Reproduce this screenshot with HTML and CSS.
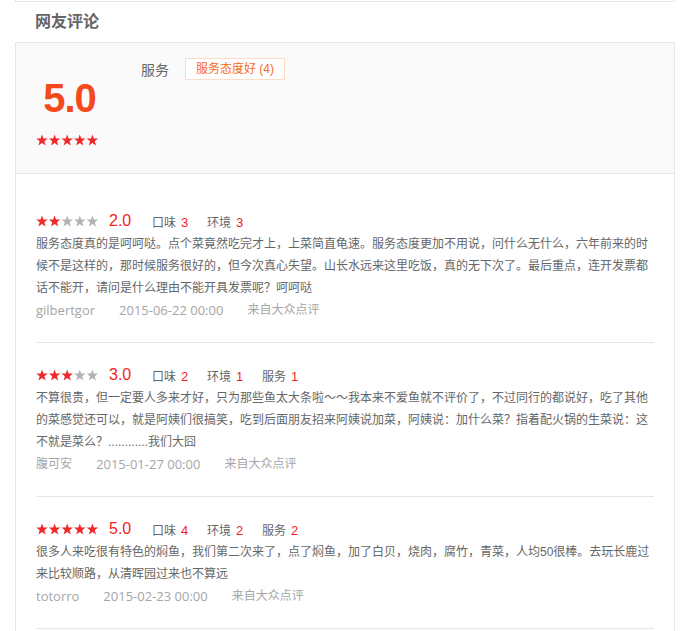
FILE: index.html
```html
<!DOCTYPE html>
<html lang="zh-CN">
<head>
<meta charset="utf-8">
<title>网友评论</title>
<link rel="stylesheet" href="styles.css">
</head>
<body>
<svg class="defs" width="0" height="0" aria-hidden="true">
  <defs>
    <polygon id="star" points="6,0.5 7.45,4.5 11.75,4.6 8.35,7.25 9.6,11.4 6,8.95 2.4,11.4 3.65,7.25 0.25,4.6 4.55,4.5"/>
  </defs>
</svg>
<div class="top-box"></div>
<h2 class="title">网友评论</h2>
<div class="panel">
  <div class="summary">
    <div class="overall">
      <div class="big-score">5.0</div>
      <svg class="stars" viewBox="0 0 63 12" width="63" height="12">
        <use href="#star" x="0" class="on"/><use href="#star" x="12.6" class="on"/><use href="#star" x="25.2" class="on"/><use href="#star" x="37.8" class="on"/><use href="#star" x="50.4" class="on"/>
      </svg>
    </div>
    <div class="tags-row">
      <span class="tag-label">服务</span>
      <span class="tag">服务态度好 (4)</span>
    </div>
  </div>
  <div class="list">
    <div class="review">
      <div class="head">
        <svg class="stars" viewBox="0 0 63 12" width="63" height="12">
          <use href="#star" x="0" class="on"/><use href="#star" x="12.6" class="on"/><use href="#star" x="25.2" class="off"/><use href="#star" x="37.8" class="off"/><use href="#star" x="50.4" class="off"/>
        </svg>
        <span class="score">2.0</span>
        <span class="item">口味<em>3</em></span>
        <span class="item">环境<em>3</em></span>
      </div>
      <p class="text">服务态度真的是呵呵哒。点个菜竟然吃完才上，上菜简直龟速。服务态度更加不用说，问什么无什么，六年前来的时候不是这样的，那时候服务很好的，但今次真心失望。山长水远来这里吃饭，真的无下次了。最后重点，连开发票都话不能开，请问是什么理由不能开具发票呢？呵呵哒</p>
      <div class="meta"><span class="user">gilbertgor</span><span class="time">2015-06-22 00:00</span><span class="src">来自大众点评</span></div>
    </div>
    <div class="review">
      <div class="head">
        <svg class="stars" viewBox="0 0 63 12" width="63" height="12">
          <use href="#star" x="0" class="on"/><use href="#star" x="12.6" class="on"/><use href="#star" x="25.2" class="on"/><use href="#star" x="37.8" class="off"/><use href="#star" x="50.4" class="off"/>
        </svg>
        <span class="score">3.0</span>
        <span class="item">口味<em>2</em></span>
        <span class="item">环境<em>1</em></span>
        <span class="item">服务<em>1</em></span>
      </div>
      <p class="text">不算很贵，但一定要人多来才好，只为那些鱼太大条啦～～我本来不爱鱼就不评价了，不过同行的都说好，吃了其他的菜感觉还可以，就是阿姨们很搞笑，吃到后面朋友招来阿姨说加菜，阿姨说：加什么菜？指着配火锅的生菜说：这不就是菜么？............我们大囧</p>
      <div class="meta"><span class="user cjk">腹可安</span><span class="time">2015-01-27 00:00</span><span class="src">来自大众点评</span></div>
    </div>
    <div class="review">
      <div class="head">
        <svg class="stars" viewBox="0 0 63 12" width="63" height="12">
          <use href="#star" x="0" class="on"/><use href="#star" x="12.6" class="on"/><use href="#star" x="25.2" class="on"/><use href="#star" x="37.8" class="on"/><use href="#star" x="50.4" class="on"/>
        </svg>
        <span class="score">5.0</span>
        <span class="item">口味<em>4</em></span>
        <span class="item">环境<em>2</em></span>
        <span class="item">服务<em>2</em></span>
      </div>
      <p class="text">很多人来吃很有特色的焖鱼，我们第二次来了，点了焖鱼，加了白贝，烧肉，腐竹，青菜，人均50很棒。去玩长鹿过来比较顺路，从清晖园过来也不算远</p>
      <div class="meta"><span class="user">totorro</span><span class="time">2015-02-23 00:00</span><span class="src">来自大众点评</span></div>
    </div>
  </div>
</div>
</body>
</html>
```

FILE: styles.css
```css
html, body {
  margin: 0;
  padding: 0;
  background: #fff;
}
body {
  font-family: "Liberation Sans", "Noto Sans CJK SC", sans-serif;
  color: #666;
  font-size: 12px;
}
.defs {
  position: absolute;
  width: 0;
  height: 0;
  overflow: hidden;
}
.top-box {
  height: 1px;
  margin: 0 13px 0 15px;
  border: 1px solid #e6e6e6;
  border-top: 0;
}
.title {
  margin: 0;
  padding-left: 35px;
  height: 40px;
  line-height: 40px;
  font-size: 16px;
  font-weight: bold;
  color: #666;
}
.panel {
  margin: 0 13px 0 15px;
  border: 1px solid #e6e6e6;
  border-bottom: 0;
  height: 600px;
}
.summary {
  display: flex;
  height: 130px;
  background: #fafafa;
  border-bottom: 1px solid #e6e6e6;
}
.overall {
  width: 63px;
  padding: 31px 0 0 20px;
  display: flex;
  flex-direction: column;
  align-items: center;
}
.big-score {
  font-size: 40px;
  line-height: 48px;
  font-weight: bold;
  color: #f4491d;
  letter-spacing: -1px;
  padding-left: 4px;
}
.overall .stars {
  margin-top: 12px;
}
.stars .on { fill: #ef2a2a; }
.stars .off { fill: #b3b3b3; }
.tags-row {
  display: flex;
  align-items: center;
  padding: 15px 0 0 42px;
  height: 22px;
}
.tag-label {
  font-size: 14px;
  color: #666;
  margin-right: 16px;
}
.tag {
  display: inline-block;
  height: 20px;
  line-height: 20px;
  padding: 0 10px;
  border: 1px solid #fbdcc7;
  color: #f96a22;
  font-size: 12px;
  background: #fff;
}
.list {
  padding: 15px 20px 0 20px;
}
.review {
  padding: 20px 0 21px;
  border-bottom: 1px solid #e6e6e6;
}
.head {
  display: flex;
  align-items: center;
  height: 24px;
}
.head .stars {
  flex: none;
}
.score {
  width: 43px;
  margin-left: 10px;
  font-size: 16px;
  color: #f01e1e;
}
.item {
  width: 55px;
  font-size: 12px;
  color: #666;
}
.item em {
  font-style: normal;
  color: #f01e1e;
  font-size: 13px;
  margin-left: 5px;
}
.text {
  margin: 0;
  line-height: 22px;
  font-size: 12px;
  color: #666;
}
.meta {
  display: flex;
  align-items: center;
  height: 22px;
  font-size: 12px;
  color: #a6a6a6;
}
.meta span {
  margin-right: 24px;
  line-height: 22px;
}
.meta .user,
.meta .time {
  font-family: "Open Sans", "Noto Sans CJK SC", sans-serif;
  font-size: 13px;
}
.meta .user.cjk {
  font-size: 12px;
}
```
